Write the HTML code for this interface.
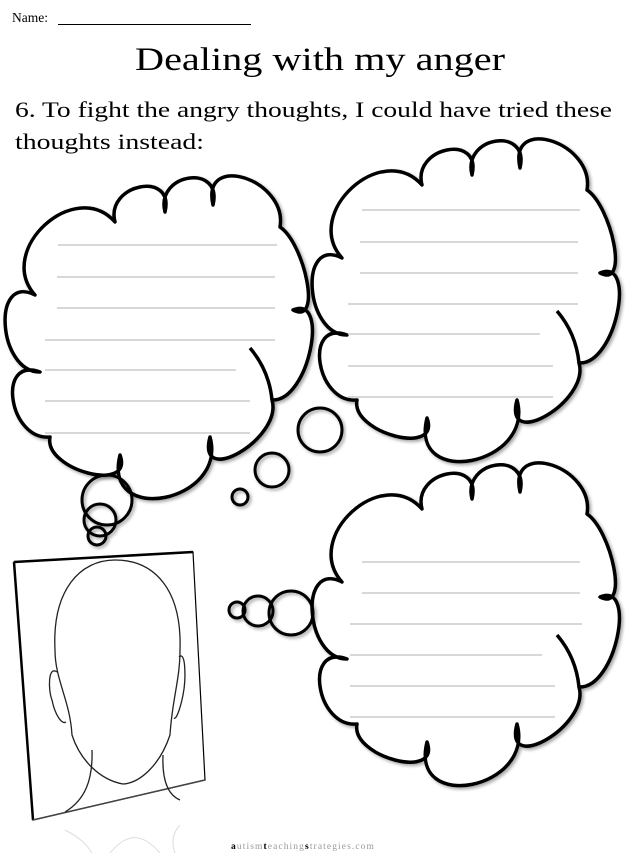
<!DOCTYPE html>
<html><head><style>
html,body{margin:0;padding:0;background:#fff;}
svg{display:block;}
</style></head>
<body>
<svg width="640" height="853" viewBox="0 0 640 853" xmlns="http://www.w3.org/2000/svg">
<defs>
<filter id="sh" x="-10%" y="-10%" width="120%" height="120%">
<feGaussianBlur in="SourceAlpha" stdDeviation="1.5"/>
<feOffset dx="2" dy="2" result="b"/>
<feComponentTransfer><feFuncA type="linear" slope="0.35"/></feComponentTransfer>
<feMerge><feMergeNode/><feMergeNode in="SourceGraphic"/></feMerge>
</filter>
<g id="cloud">
<path d="M35,295 C-5,250 75,177 115,222 C105,184 175,170 165,212 C155,173 223,163 213,205 C201,151 288,180 280,227 C304,243 323,326 293,310 C330,294 309,402 272,400 C283,438 196,489 210,437 C228,502 102,527 120,455 C134.5,494 43.5,470 50,437 C9,441 -4,356 40,372 C-2,372.5 -9,272.5 35,295 Z" fill="#fff" stroke="#000" stroke-width="3.5" stroke-linejoin="round" filter="url(#sh)"/>
<path d="M250,348 C262,362 270,380 272,400" fill="none" stroke="#000" stroke-width="3.5"/>
</g>
</defs>

<text x="12" y="22" font-family="Liberation Serif, serif" font-size="13.5">Name:</text>
<line x1="58" y1="24.5" x2="251" y2="24.5" stroke="#000" stroke-width="1"/>
<text x="135" y="70" font-family="Liberation Serif, serif" font-size="33" textLength="370" lengthAdjust="spacingAndGlyphs">Dealing with my anger</text>
<text x="15" y="117" font-family="Liberation Serif, serif" font-size="22" textLength="597" lengthAdjust="spacingAndGlyphs">6.  To fight the angry thoughts, I could have tried these</text>
<text x="15" y="149" font-family="Liberation Serif, serif" font-size="22" textLength="189" lengthAdjust="spacingAndGlyphs">thoughts instead:</text>

<g fill="none" stroke="#000" stroke-width="3" filter="url(#sh)">
<circle cx="320" cy="430" r="22"/>
</g>

<use href="#cloud"/>
<use href="#cloud" transform="translate(307,-37)"/>
<use href="#cloud" transform="translate(307,287)"/>

<g fill="none" stroke="#000" stroke-width="3" filter="url(#sh)">
<circle cx="272" cy="470" r="17"/>
<circle cx="240" cy="497" r="8"/>
<circle cx="107" cy="500" r="25"/>
<circle cx="100" cy="520" r="16"/>
<circle cx="97" cy="536" r="9"/>
<circle cx="291" cy="613" r="22"/>
<circle cx="258" cy="611" r="15"/>
<circle cx="237" cy="610" r="8"/>
</g>

<g stroke="#ccc" stroke-width="1.5">
<line x1="58" y1="245" x2="277" y2="245"/>
<line x1="57" y1="277" x2="275" y2="277"/>
<line x1="57" y1="308" x2="275" y2="308"/>
<line x1="45" y1="340" x2="275" y2="340"/>
<line x1="45" y1="370" x2="236" y2="370"/>
<line x1="45" y1="401" x2="250" y2="401"/>
<line x1="45" y1="433" x2="250" y2="433"/>

<line x1="362" y1="210" x2="580" y2="210"/>
<line x1="360" y1="242" x2="578" y2="242"/>
<line x1="360" y1="273" x2="578" y2="273"/>
<line x1="348" y1="304" x2="578" y2="304"/>
<line x1="348" y1="334" x2="540" y2="334"/>
<line x1="348" y1="366" x2="553" y2="366"/>
<line x1="348" y1="397" x2="553" y2="397"/>

<line x1="362" y1="562" x2="580" y2="562"/>
<line x1="362" y1="593" x2="580" y2="593"/>
<line x1="350" y1="624" x2="582" y2="624"/>
<line x1="350" y1="655" x2="542" y2="655"/>
<line x1="350" y1="686" x2="555" y2="686"/>
<line x1="350" y1="717" x2="555" y2="717"/>
</g>

<path d="M14,562 L193,552 L205,780 L33,820 Z" fill="#fff" stroke="#000" stroke-width="1.2"/>
<path d="M14,562 L193,552 M14,562 L33,820" stroke="#000" stroke-width="2.5" fill="none"/>
<path d="M33,820 L205,780" stroke="#444" stroke-width="1.5"/>
<g fill="none" stroke="#222" stroke-width="1.3">
<path d="M123,784 C100,780 80,760 72,735 C70,700 55,680 55,650 C52,590 80,560 115,560 C155,560 182,590 180,650 C180,680 172,700 170,735 C160,765 140,783 123,784 Z"/>
<path d="M57,672 C48,665 48,690 52,700 C55,715 62,725 66,722"/>
<path d="M179,657 C186,650 186,680 183,695 C180,710 176,720 174,718"/>
<path d="M92,750 C93,780 85,800 65,812"/>
<path d="M163,755 C162,780 168,795 180,800"/>
</g>
<g fill="none" stroke="#ddd" stroke-width="1">
<path d="M65,830 C85,840 90,850 92,853"/>
<path d="M110,853 C125,835 140,830 160,853"/>
<path d="M175,853 C170,840 175,830 180,825"/>
</g>

<text x="231" y="849" font-family="Liberation Serif, serif" font-size="9.5" fill="#999" letter-spacing="1.1"><tspan fill="#000" font-weight="bold">a</tspan>utism<tspan fill="#000" font-weight="bold">t</tspan>eaching<tspan fill="#000" font-weight="bold">s</tspan>trategies.com</text>
</svg>
</body></html>
